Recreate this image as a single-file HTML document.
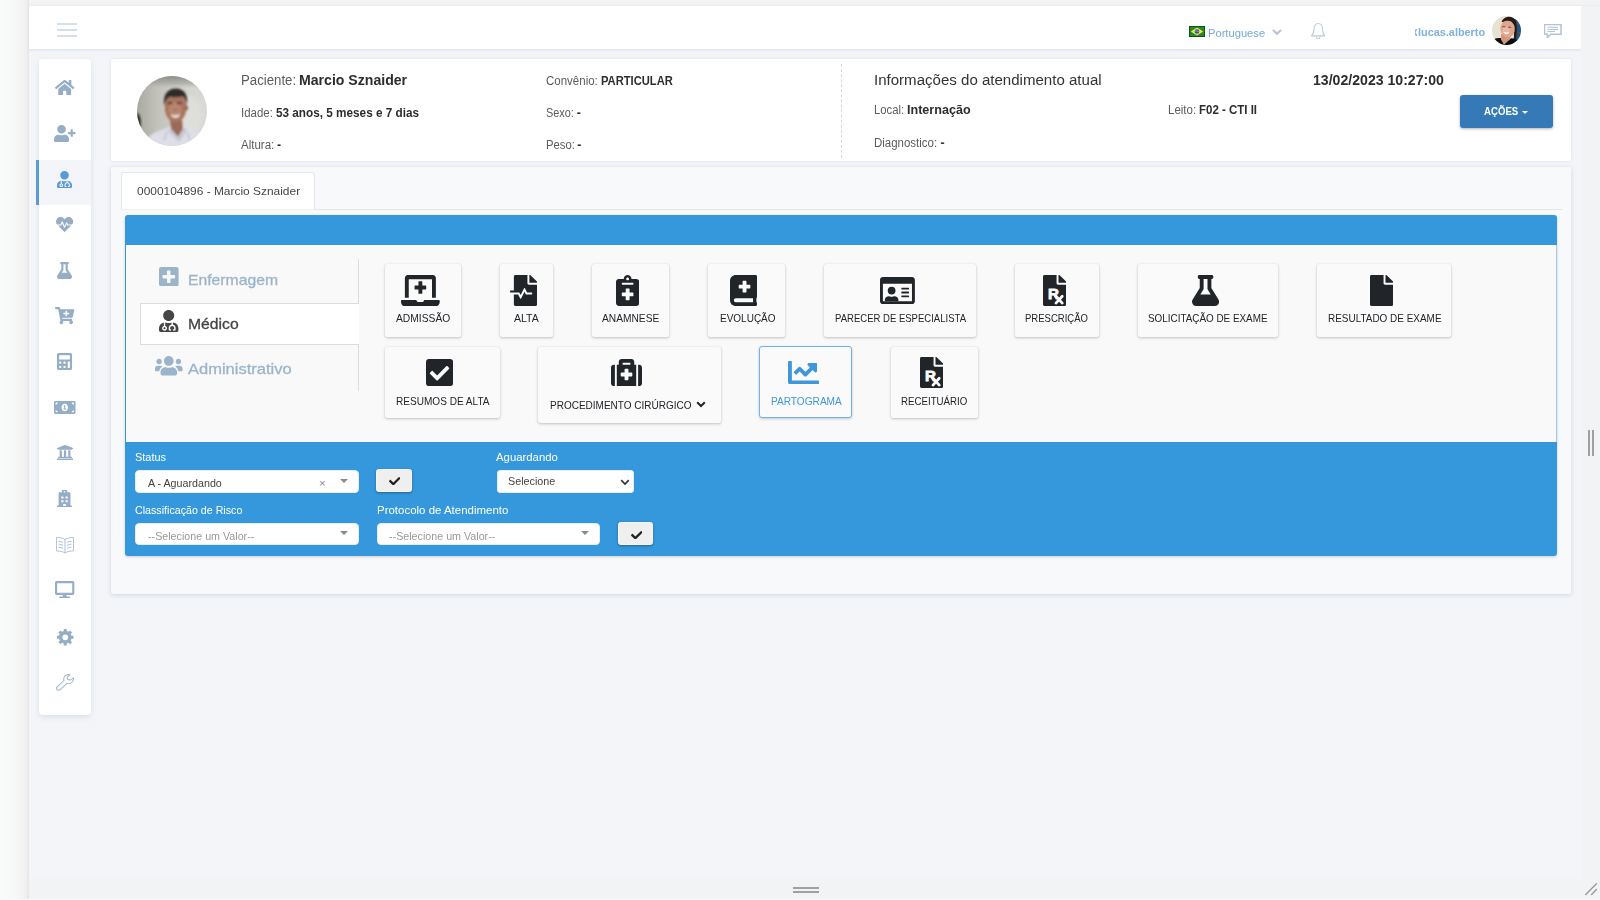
<!DOCTYPE html>
<html lang="pt-BR">
<head>
<meta charset="utf-8">
<title>Prontuário - Marcio Sznaider</title>
<style>
*{box-sizing:border-box;margin:0;padding:0}
html,body{width:1600px;height:900px;overflow:hidden}
body{font-family:"Liberation Sans",sans-serif;font-size:12px;color:#333;background:#f1f3f4;position:relative}
.abs{position:absolute}
.t{position:absolute;white-space:nowrap;line-height:1;font-style:normal;transform-origin:0 0}
#fl{left:0;top:0;width:29px;height:900px;background:linear-gradient(90deg,#f9fbfa 0,#f7f9f8 12px,#f2f3f2 23px,#eeeeee 27px,#e2e3e3 29px)}
#ft{left:29px;top:0;width:1571px;height:6px;background:linear-gradient(180deg,#f3f4f3 0,#f1f2f1 4.5px,#e9eaea 6px)}
#fr{left:1581px;top:6px;width:19px;height:894px;background:#f1f3f4}
#fb{left:29px;top:879px;width:1571px;height:21px;background:#f1f3f4}
#fb2{left:0;top:899px;width:1600px;height:1px;background:#fafbfb}
#page{left:29px;top:6px;width:1552px;height:873px;background:#f3f5f9;overflow:hidden}
#nav{left:0;top:0;width:1552px;height:43px;background:#fff;box-shadow:0 1px 2px rgba(200,207,220,.6)}
.card{background:#fff;border-radius:4px;box-shadow:0 0 3px rgba(200,208,220,.6)}
#side{left:10px;top:53px;width:52px;height:656px;box-shadow:0 2px 5px rgba(195,204,218,.5)}
#pat{left:82px;top:53px;width:1460px;height:102px;border-radius:2px}
#main{left:82px;top:160.500px;width:1460px;height:427.500px;background:#f8f9fb;border-radius:2px;box-shadow:0 1px 4px rgba(190,198,212,.7)}
.btn{background:#fafafa;border-radius:2px;box-shadow:0 1px 3px rgba(0,0,0,.22),0 0 1px rgba(0,0,0,.12)}
.btn.act{border:1.500px solid #72b2e6;border-radius:3px;box-shadow:0 1px 3px rgba(0,0,0,.2)}
.sel{background:#fff;border-radius:4px;border:1px solid #e3eef8}
.ok{background:#efefef;border:1px solid #f9f3ef;border-radius:2.500px;box-shadow:0 1px 2.500px rgba(0,0,0,.35)}
.car{width:0;height:0;border-left:4px solid transparent;border-right:4px solid transparent;border-top:4.500px solid #8a8a8a}
</style>
</head>
<body>
<div id="fl" class="abs"></div>
<div id="ft" class="abs"></div>
<div id="fr" class="abs"></div>
<div id="fb" class="abs"></div>
<div id="fb2" class="abs"></div>
<div class="abs" style="left:793px;top:887px;width:26px;height:2px;background:#a0a0a0"></div>
<div class="abs" style="left:793px;top:891px;width:26px;height:2px;background:#a0a0a0"></div>
<div class="abs" style="left:1588px;top:430px;width:2px;height:26px;background:#a0a0a0"></div>
<div class="abs" style="left:1592px;top:430px;width:2px;height:26px;background:#a0a0a0"></div>
<svg class="abs" style="left:1584px;top:882px" width="14" height="14" viewBox="0 0 14 14"><path d="M1.800 12.400L12.400 1.800M7.600 12.400L12.400 7.600" stroke="#9a9a9a" stroke-width="1.400" stroke-linecap="round"/></svg>
<div id="page" class="abs">
<div id="nav" class="abs">
<div class="abs" style="left:28px;top:17px;width:20px;height:2px;background:#d6dfea"></div>
<div class="abs" style="left:28px;top:23px;width:20px;height:2px;background:#d6dfea"></div>
<div class="abs" style="left:28px;top:29px;width:20px;height:2px;background:#d6dfea"></div>
<svg class="abs" style="left:1160px;top:20px" width="16" height="11" viewBox="0 0 16 11"><rect width="16" height="11" fill="#1f8a2e"/><rect x=".5" y=".5" width="15" height="10" fill="none" stroke="#14521c" stroke-width="1"/><path d="M8 1.600L14.300 5.500 8 9.400 1.700 5.500z" fill="#f5e033"/><circle cx="8" cy="5.500" r="2.300" fill="#2d4fc4"/><path d="M5.900 5c1.500-.3 3 .1 4.200 1" stroke="#dfe8ff" stroke-width=".5" fill="none"/></svg>
<span id="t1" class="t" style="left:1179.30px;top:21.62px;font-size:11.2px;color:#74a9dc;transform:scaleX(0.9976);">Portuguese</span>
<svg class="abs" style="left:1242.500px;top:23px" width="10" height="6" viewBox="0 0 10 6"><path d="M1 1l4 3.800L9 1" fill="none" stroke="#b5c5d8" stroke-width="2.200"/></svg>
<svg class="abs" style="left:1281.50px;top:16.60px;color:#bccbdc" width="14.50" height="16.40" viewBox="0.85 0.85 18.3 19.9" preserveAspectRatio="none" fill="currentColor" ><g fill="none" stroke="currentColor" stroke-width="1.3" stroke-linejoin="round" stroke-linecap="round"><path d="M10 1.500c-3.200 0-5.300 2.500-5.300 5.800 0 5-1.200 7.200-3.200 9.200h17c-2-2-3.200-4.200-3.200-9.200 0-3.300-2.100-5.800-5.300-5.800z"/><path d="M7.800 17.500c0 1.500 1 2.600 2.200 2.600s2.200-1.100 2.200-2.600"/></g></svg>
<span id="t2" class="t" style="left:1388.50px;top:21.02px;font-size:11.2px;color:#7fb1df;font-weight:700;transform:scaleX(0.9720);">lucas.alberto</span>
<div class="abs" style="left:1386px;top:20px;width:2px;height:11px;overflow:hidden"><span class="t" style="left:-4px;top:0;font-size:12px;font-weight:700;color:#7fb1df">x</span></div>
<svg class="abs" style="left:1463px;top:9.600px" width="29" height="29" viewBox="0 0 29 29"><defs><clipPath id="ca"><circle cx="14.500" cy="14.500" r="14.500"/></clipPath><filter id="ba" x="-20%" y="-20%" width="140%" height="140%"><feGaussianBlur stdDeviation=".6"/></filter></defs><g clip-path="url(#ca)"><rect width="29" height="29" fill="#e7e3d3"/><g filter="url(#ba)"><rect x="23" y="0" width="7" height="29" fill="#1f5583"/><rect x="23.500" y="6.800" width="6" height="1.500" fill="#7a4a33"/><rect x="23.500" y="16" width="6" height="1.500" fill="#7a4a33"/><path d="M9.800 6c1-4.500 7.500-7 12.500-3.500 3 3 3.200 11 1.700 20l-2.500 2.500c1-7 .8-13.500-1-17.500-3.200-1.500-7.700-1.800-10.700-1.500z" fill="#231a18"/><path d="M0 25c1.500-2.500 5-3.300 9.500-2.800l2.500 6 7-6c4 0 7 1.500 10 5v3H0z" fill="#101010"/><path d="M9 18l10 2-1.500 3.500-5.500 5-3-5z" fill="#d2957d"/><ellipse cx="15.600" cy="12.800" rx="7.200" ry="8.700" fill="#dfa78f" transform="rotate(-8 15.600 12.800)"/><ellipse cx="14" cy="14" rx="3.800" ry="3.300" fill="#e9b7a3"/><path d="M9.400 6.300c1.500-3.300 8-4.600 11.500-1.800l-.3 1.200c-3.500-1.400-7.700-1.200-11.200.6z" fill="#2a1e1c"/><path d="M10.300 11c.8-.6 2-.6 2.900 0M16.300 11.500c.8-.6 2-.5 2.900.2" stroke="#5a3c33" stroke-width="1" fill="none"/><path d="M11.300 15.800c1.800.9 4.300 1 6.200.2-.6 1.600-1.800 2.200-3.200 2.200-1.300 0-2.500-.8-3-2.400z" fill="#fbf5f1"/></g></g></svg>
<svg class="abs" style="left:1515.00px;top:18.00px;color:#b3c4d9" width="17.50" height="14.00" viewBox="0.4 0.4 23.2 19.2" preserveAspectRatio="none" fill="currentColor" ><g fill="none" stroke="currentColor" stroke-width="2.1"><path d="M1 1h22v13.500H9.500L4.800 19v-4.500H1z" stroke-linejoin="miter"/><path d="M5 5h14M5 7.800h14M5 10.600h10" stroke-width="1.4"/></g></svg>
</div>
<div id="side" class="abs card"></div>
<div class="abs" style="left:10px;top:154px;width:52px;height:45px;background:#f3f5f9"></div>
<div class="abs" style="left:7px;top:154px;width:3px;height:45px;background:#5b9bd5"></div>
<svg class="abs" style="left:26.32px;top:74.48px;color:#95adc5" width="19.35" height="15.05" viewBox="-0.01 32.05 576.04 447.95" preserveAspectRatio="none" fill="currentColor" ><path d="M280.37 148.26L96 300.11V464a16 16 0 0 0 16 16l112.06-.29a16 16 0 0 0 15.92-16V368a16 16 0 0 1 16-16h64a16 16 0 0 1 16 16v95.64a16 16 0 0 0 16 16.05L464 480a16 16 0 0 0 16-16V300L295.67 148.26a12.19 12.19 0 0 0-15.3 0zM571.6 251.47L488 182.56V44.05a12 12 0 0 0-12-12h-56a12 12 0 0 0-12 12v72.61L318.47 43a48 48 0 0 0-61 0L4.34 251.47a12 12 0 0 0-1.6 16.9l25.5 31A12 12 0 0 0 45.15 301l235.22-193.74a12.19 12.19 0 0 1 15.3 0L530.9 301a12 12 0 0 0 16.9-1.6l25.5-31a12 12 0 0 0-1.7-16.93z"/></svg>
<svg class="abs" style="left:25.25px;top:119.00px;color:#95adc5" width="21.50" height="17.20" viewBox="0 0 640 512" preserveAspectRatio="none" fill="currentColor" ><path d="M624 208h-64v-64c0-8.800-7.200-16-16-16h-32c-8.800 0-16 7.200-16 16v64h-64c-8.800 0-16 7.200-16 16v32c0 8.800 7.200 16 16 16h64v64c0 8.800 7.200 16 16 16h32c8.800 0 16-7.200 16-16v-64h64c8.800 0 16-7.200 16-16v-32c0-8.800-7.200-16-16-16zm-400 48c70.700 0 128-57.300 128-128S294.700 0 224 0 96 57.300 96 128s57.300 128 128 128zm89.600 32h-16.700c-22.200 10.200-46.900 16-72.900 16s-50.600-5.800-72.900-16h-16.700C60.200 288 0 348.200 0 422.400V464c0 26.500 21.500 48 48 48h352c26.500 0 48-21.500 48-48v-41.600c0-74.200-60.200-134.400-134.400-134.400z"/></svg>
<svg class="abs" style="left:28.48px;top:164.60px;color:#5b9bd5" width="15.05" height="17.20" viewBox="0 0 448 512" preserveAspectRatio="none" fill="currentColor" ><path d="M224 256c70.700 0 128-57.300 128-128S294.700 0 224 0 96 57.300 96 128s57.300 128 128 128zM104 424c0 13.300 10.700 24 24 24s24-10.700 24-24-10.700-24-24-24-24 10.700-24 24zm216-135.400v49c36.500 7.400 64 39.800 64 78.400v41.700c0 7.600-5.400 14.200-12.900 15.700l-32.200 6.400c-4.300.9-8.500-1.900-9.400-6.300l-3.100-15.700c-.9-4.300 1.900-8.600 6.300-9.400l19.300-3.900V416c0-62.800-96-65.100-96 1.900v26.700l19.300 3.900c4.300.9 7.100 5.100 6.300 9.400l-3.100 15.700c-.9 4.300-5.100 7.100-9.400 6.300l-31.200-4.200c-7.900-1.100-13.800-7.800-13.800-15.900V416c0-38.600 27.500-70.900 64-78.400v-45.200c-2.200.7-4.400 1.100-6.600 1.900-18 6.300-37.300 9.800-57.400 9.800s-39.400-3.500-57.400-9.800c-7.400-2.600-14.900-4.200-22.600-5.200v81.600c23.100 6.900 40 28.100 40 53.400 0 30.900-25.100 56-56 56s-56-25.100-56-56c0-25.300 16.900-46.500 40-53.400v-80.400C48.500 301 0 355.800 0 422.400v44.800C0 491.900 20.100 512 44.800 512h358.400c24.700 0 44.800-20.100 44.800-44.800v-44.800c0-72-56.800-130.300-128-133.800z"/></svg>
<svg class="abs" style="left:27.40px;top:211.27px;color:#95adc5" width="17.20" height="15.05" viewBox="-0.01 31.95 512.03 448.02" preserveAspectRatio="none" fill="currentColor" ><path d="M320.200 243.800l-49.700 99.400c-6 12.100-23.400 11.700-28.900-.6l-56.900-126.300-30 71.700H60.600l182.500 186.500c7.100 7.300 18.600 7.300 25.700 0L451.400 288H342.300l-22.100-44.200zM473.700 73.900l-2.400-2.500c-51.500-52.600-135.800-52.600-187.400 0L256 100l-27.900-28.500c-51.500-52.700-135.900-52.700-187.400 0l-2.400 2.400C-10.400 123.700-12.500 203 31 256h102.400l35.900-86.200c5.400-12.900 23.600-13.200 29.400-.4l58.200 129.300 49-97.900c5.900-11.800 22.700-11.800 28.600 0l27.600 55.200H481c43.500-53 41.400-132.300-7.300-182.100z"/></svg>
<svg class="abs" style="left:28.48px;top:255.80px;color:#95adc5" width="15.05" height="17.20" viewBox="0.01 0 448 512" preserveAspectRatio="none" fill="currentColor" ><path d="M437.200 403.500L320 215V64h8c13.300 0 24-10.700 24-24V24c0-13.300-10.700-24-24-24H120c-13.300 0-24 10.700-24 24v16c0 13.300 10.700 24 24 24h8v151L10.800 403.500C-18.500 450.600 15.300 512 70.900 512h306.200c55.700 0 89.400-61.500 60.100-108.500zM137.900 320l48.200-77.600c3.700-5.200 5.800-11.600 5.800-18.400V64h64v160c0 6.900 2.200 13.200 5.800 18.400l48.200 77.600h-172z"/></svg>
<svg class="abs" style="left:26.33px;top:301.40px;color:#95adc5" width="19.35" height="17.20" viewBox="0 0 576 512" preserveAspectRatio="none" fill="currentColor" ><path d="M504.717 320H211.572l6.545 32h268.418c15.401 0 26.816 14.301 23.403 29.319l-5.517 24.276C523.112 414.668 536 433.828 536 456c0 31.202-25.519 56.444-56.824 55.994-29.823-.429-54.350-24.631-55.155-54.447-.44-16.287 6.085-31.049 16.803-41.548H231.176C241.553 426.165 248 440.326 248 456c0 31.813-26.528 57.431-58.670 55.938-28.540-1.325-51.751-24.385-53.251-52.917-1.158-22.034 10.436-41.455 28.051-51.586L93.883 64H24C10.745 64 0 53.255 0 40V24C0 10.745 10.745 0 24 0h102.529c11.401 0 21.228 8.021 23.513 19.190L159.208 64H551.990c15.401 0 26.816 14.301 23.403 29.319l-47.273 208C525.637 312.246 515.923 320 504.717 320zM408 168h-48v-40c0-8.837-7.163-16-16-16h-16c-8.837 0-16 7.163-16 16v40h-48c-8.837 0-16 7.163-16 16v16c0 8.837 7.163 16 16 16h48v40c0 8.837 7.163 16 16 16h16c8.837 0 16-7.163 16-16v-40h48c8.837 0 16-7.163 16-16v-16c0-8.837-7.163-16-16-16z"/></svg>
<svg class="abs" style="left:28.48px;top:347.00px;color:#95adc5" width="15.05" height="17.20" viewBox="0 0 448 512" preserveAspectRatio="none" fill="currentColor" ><path d="M400 0H48C22.400 0 0 22.400 0 48v416c0 25.600 22.400 48 48 48h352c25.600 0 48-22.400 48-48V48c0-25.600-22.400-48-48-48zM128 435.200c0 6.400-6.400 12.800-12.800 12.800H76.800c-6.400 0-12.800-6.400-12.800-12.800v-38.400c0-6.400 6.400-12.800 12.800-12.800h38.400c6.400 0 12.800 6.400 12.800 12.800v38.400zm0-128c0 6.400-6.400 12.800-12.800 12.800H76.800c-6.400 0-12.800-6.400-12.800-12.800v-38.400c0-6.400 6.400-12.800 12.800-12.800h38.400c6.400 0 12.800 6.400 12.800 12.800v38.400zm128 128c0 6.400-6.400 12.800-12.800 12.800h-38.400c-6.400 0-12.800-6.400-12.800-12.800v-38.400c0-6.400 6.400-12.800 12.800-12.800h38.400c6.400 0 12.800 6.400 12.800 12.800v38.400zm0-128c0 6.400-6.400 12.800-12.800 12.800h-38.400c-6.400 0-12.800-6.400-12.800-12.800v-38.400c0-6.400 6.400-12.800 12.800-12.800h38.400c6.400 0 12.800 6.400 12.800 12.800v38.400zm128 128c0 6.400-6.400 12.800-12.800 12.800h-38.400c-6.400 0-12.800-6.400-12.800-12.800V268.800c0-6.400 6.400-12.800 12.800-12.800h38.400c6.400 0 12.800 6.400 12.800 12.800v166.400zm0-256c0 6.400-6.400 12.800-12.800 12.800H76.800c-6.400 0-12.800-6.400-12.800-12.800V76.800C64 70.400 70.400 64 76.800 64h294.400c6.400 0 12.800 6.400 12.800 12.800v102.400z"/></svg>
<svg class="abs" style="left:25.25px;top:394.75px;color:#95adc5" width="21.50" height="12.90" viewBox="0 64 640 384" preserveAspectRatio="none" fill="currentColor" ><path d="M352 288h-16v-88c0-4.420-3.580-8-8-8h-13.580c-4.740 0-9.370 1.400-13.310 4.030l-15.330 10.220a7.994 7.994 0 0 0-2.220 11.090l8.880 13.310a7.994 7.994 0 0 0 11.090 2.220l.47-.31V288h-16c-4.420 0-8 3.580-8 8v16c0 4.420 3.580 8 8 8h64c4.420 0 8-3.580 8-8v-16c0-4.420-3.580-8-8-8zM608 64H32C14.330 64 0 78.330 0 96v320c0 17.670 14.330 32 32 32h576c17.670 0 32-14.330 32-32V96c0-17.670-14.330-32-32-32zM48 400v-64c35.350 0 64 28.650 64 64H48zm0-224v-64h64c0 35.350-28.650 64-64 64zm272 192c-53.020 0-96-50.150-96-112 0-61.860 42.980-112 96-112s96 50.140 96 112c0 61.870-43 112-96 112zm272 32h-64c0-35.350 28.650-64 64-64v64zm0-224c-35.350 0-64-28.650-64-64h64v64z"/></svg>
<svg class="abs" style="left:27.94px;top:439.28px;color:#95adc5" width="16.12" height="15.05" viewBox="16 32 480 448" preserveAspectRatio="none" fill="currentColor" ><path d="M496 128v16a8 8 0 0 1-8 8h-24v12c0 6.627-5.373 12-12 12H60c-6.627 0-12-5.373-12-12v-12H24a8 8 0 0 1-8-8v-16a8 8 0 0 1 4.941-7.392l232-88a7.996 7.996 0 0 1 6.118 0l232 88A8 8 0 0 1 496 128zm-24 304H40c-13.255 0-24 10.745-24 24v16a8 8 0 0 0 8 8h464a8 8 0 0 0 8-8v-16c0-13.255-10.745-24-24-24zM96 192v192H60c-6.627 0-12 5.373-12 12v20h416v-20c0-6.627-5.373-12-12-12h-36V192h-64v192h-64V192h-64v192h-64V192H96z"/></svg>
<svg class="abs" style="left:28.48px;top:483.80px;color:#95adc5" width="15.05" height="17.20" viewBox="0 0 448 512" preserveAspectRatio="none" fill="currentColor" ><path fill-rule="evenodd" d="M160 0h128c9 0 16 7 16 16v48h64c18 0 32 14 32 32v368h32c9 0 16 7 16 16v32H0v-32c0-9 7-16 16-16h32V96c0-18 14-32 32-32h64V16c0-9 7-16 16-16zM128 192v64h64v-64zM256 192v64h64v-64zM128 304v64h64v-64zM256 304v64h64v-64zM184 416v64h80v-64zM200 40v32h48V40z"/></svg>
<svg class="abs" style="left:27.00px;top:531.00px;color:#a9bdd0" width="18.00" height="16.50" viewBox="0.95 1.45 22.1 19.6" preserveAspectRatio="none" fill="currentColor" ><g fill="none" stroke="currentColor" stroke-width="1.1" stroke-linejoin="round"><path d="M12 4.500C9.500 2.800 5.500 2 1.500 2v16c4 0 8 .8 10.500 2.500C14.500 18.800 18.500 18 22.500 18V2c-4 0-8 .8-10.500 2.500zM12 4.500v16"/><path d="M4 6.500c2 .2 4 .7 5.500 1.400M4 10c2 .2 4 .7 5.500 1.400M4 13.500c2 .2 4 .7 5.500 1.400M20 6.500c-2 .2-4 .7-5.500 1.400M20 10c-2 .2-4 .7-5.500 1.400M20 13.500c-2 .2-4 .7-5.500 1.400"/></g></svg>
<svg class="abs" style="left:26.33px;top:575.00px;color:#95adc5" width="19.35" height="17.20" viewBox="0 0 576 512" preserveAspectRatio="none" fill="currentColor" ><path d="M528 0H48C21.500 0 0 21.500 0 48v320c0 26.500 21.500 48 48 48h192l-16 48h-72c-13.300 0-24 10.700-24 24s10.700 24 24 24h272c13.300 0 24-10.700 24-24s-10.700-24-24-24h-72l-16-48h192c26.500 0 48-21.500 48-48V48c0-26.500-21.500-48-48-48zm-16 352H64V64h448v288z"/></svg>
<svg class="abs" style="left:28.00px;top:623.00px;color:#95adc5" width="16.50" height="16.60" viewBox="9.7 9.7 492.6 492.6" preserveAspectRatio="none" fill="currentColor" ><path fill-rule="evenodd" d="M213.0 9.7 L299.0 9.7 L300.8 69.3 L356.3 92.3 L399.8 51.5 L460.5 112.2 L419.7 155.7 L442.7 211.2 L502.3 213.0 L502.3 299.0 L442.7 300.8 L419.7 356.3 L460.5 399.8 L399.8 460.5 L356.3 419.7 L300.8 442.7 L299.0 502.3 L213.0 502.3 L211.2 442.7 L155.7 419.7 L112.2 460.5 L51.5 399.8 L92.3 356.3 L69.3 300.8 L9.7 299.0 L9.7 213.0 L69.3 211.2 L92.3 155.7 L51.5 112.2 L112.2 51.5 L155.7 92.3 L211.2 69.3ZM170 256a86 86 0 1 0 172 0a86 86 0 1 0 -172 0z"/></svg>
<svg class="abs" style="left:27.00px;top:668.00px;color:#9fb6cc" width="18.00" height="16.70" viewBox="1.05 1.33 21.22 21.22" preserveAspectRatio="none" fill="currentColor" ><path fill="none" stroke="currentColor" stroke-width="1.2" stroke-linejoin="round" d="M21.500 6.200c.5 2-.1 4.100-1.600 5.600-1.600 1.600-3.900 2.100-5.900 1.500L6 21.200c-1 1-2.600 1-3.600 0s-1-2.600 0-3.600l8-8c-.6-2-.1-4.300 1.500-5.900 1.500-1.500 3.600-2.100 5.600-1.600l-3.300 3.300.7 2.900 2.900.7z"/></svg>
<div id="pat" class="abs card"></div>
<svg class="abs" style="left:108px;top:70px" width="70" height="70" viewBox="0 0 70 70"><defs><clipPath id="cp"><circle cx="35" cy="35" r="35"/></clipPath><filter id="bp" x="-20%" y="-20%" width="140%" height="140%"><feGaussianBlur stdDeviation=".9"/></filter><filter id="bp2" x="-20%" y="-20%" width="140%" height="140%"><feGaussianBlur stdDeviation="2.500"/></filter><linearGradient id="gp" x1="0" y1="0" x2="1" y2="0"><stop offset="0" stop-color="#a9a9a1"/><stop offset=".3" stop-color="#c3c3bc"/><stop offset=".7" stop-color="#d3d3cf"/><stop offset="1" stop-color="#d8d8d6"/></linearGradient><linearGradient id="gt" x1="0" y1="0" x2="0" y2="1"><stop offset="0" stop-color="#8d8e88"/><stop offset=".6" stop-color="#a3a49e" stop-opacity=".7"/><stop offset="1" stop-color="#b0b0aa" stop-opacity="0"/></linearGradient></defs><g clip-path="url(#cp)"><rect width="70" height="70" fill="url(#gp)"/><rect width="70" height="12" fill="url(#gt)"/><ellipse cx="52" cy="40" rx="14" ry="20" fill="#dededb" filter="url(#bp2)"/><g filter="url(#bp)"><path d="M-2 36c5 1 7 8 5 17l-6 3z" fill="#2a2522"/><path d="M8 72c1-11 7-16 20-19l6-3h12l6 2c9 2 15 7 17 16l-5 6z" fill="#dedee8"/><path d="M33 44h12l1 9-5 8-7-8z" fill="#9a6a56"/><path d="M33 52l8 9 6-9 3 2-8 12-11-11z" fill="#c6c6d2"/><path d="M30 55l-3 9M50 56l3 8" stroke="#bdbdc9" stroke-width="1.200" fill="none"/><ellipse cx="38.600" cy="31.500" rx="10.800" ry="15" fill="#a8755f"/><ellipse cx="38" cy="34" rx="6.500" ry="8" fill="#b8856f"/><ellipse cx="49.600" cy="32" rx="1.400" ry="2.800" fill="#96614d"/><path d="M27.300 30c-1.800-11 3-17.500 11.500-17.500 8.400 0 12.800 6.500 11 16.500-.8-4.500-2.300-7.500-4.300-8.800-4.200 1.300-9.200 1.300-13 .6-2.600 1.800-4.200 4.600-5.200 9.200z" fill="#2e2a2a"/><path d="M33.700 38.200c2.500 1.300 7 1.300 9.600-.2-.8 2.600-2.600 3.900-4.800 3.900s-4-1.200-4.800-3.700z" fill="#eadfda"/><path d="M30.800 27.600c1.300-.9 3.200-.9 4.500 0M40 27.600c1.300-.9 3.200-.9 4.500 0" stroke="#3e2a24" stroke-width="1.700" fill="none"/><path d="M36.500 33.500c1 .8 2.500.8 3.600 0" stroke="#8a5a48" stroke-width="1" fill="none"/></g></g></svg>
<span id="t3" class="t" style="left:211.50px;top:67.15px;font-size:14px;color:#5c5c5c;transform:scaleX(0.9433);">Paciente:</span>
<b id="t4" class="t" style="left:270.25px;top:67.15px;font-size:14px;color:#2d2d2d;font-weight:700;transform:scaleX(1.0068);">Marcio Sznaider</b>
<span id="t5" class="t" style="left:211.50px;top:100.84px;font-size:12px;color:#5c5c5c;transform:scaleX(0.9535);">Idade:</span>
<b id="t6" class="t" style="left:246.50px;top:100.84px;font-size:12px;color:#2d2d2d;font-weight:700;transform:scaleX(0.9794);">53 anos, 5 meses e 7 dias</b>
<span id="t7" class="t" style="left:211.50px;top:132.84px;font-size:12px;color:#5c5c5c;transform:scaleX(0.9608);">Altura:</span>
<b id="t8" class="t" style="left:248.00px;top:132.84px;font-size:12px;color:#2d2d2d;font-weight:700;">-</b>
<span id="t9" class="t" style="left:516.75px;top:68.84px;font-size:12px;color:#5c5c5c;transform:scaleX(0.9589);">Convênio:</span>
<b id="t10" class="t" style="left:571.50px;top:68.84px;font-size:12px;color:#2d2d2d;font-weight:700;transform:scaleX(0.9313);">PARTICULAR</b>
<span id="t11" class="t" style="left:516.75px;top:100.84px;font-size:12px;color:#5c5c5c;transform:scaleX(0.9057);">Sexo:</span>
<b id="t12" class="t" style="left:547.75px;top:100.84px;font-size:12px;color:#2d2d2d;font-weight:700;">-</b>
<span id="t13" class="t" style="left:516.75px;top:132.84px;font-size:12px;color:#5c5c5c;transform:scaleX(0.9389);">Peso:</span>
<b id="t14" class="t" style="left:548.25px;top:132.84px;font-size:12px;color:#2d2d2d;font-weight:700;">-</b>
<div class="abs" style="left:812px;top:58px;width:0;height:94px;border-left:1px dashed #d9d9d9"></div>
<span id="t15" class="t" style="left:844.75px;top:67.15px;font-size:14px;color:#333;transform:scaleX(1.0753);">Informações do atendimento atual</span>
<b id="t16" class="t" style="left:1283.50px;top:67.15px;font-size:14px;color:#2d2d2d;font-weight:700;transform:scaleX(1.0070);">13/02/2023 10:27:00</b>
<span id="t17" class="t" style="left:844.75px;top:97.84px;font-size:12px;color:#5c5c5c;transform:scaleX(0.9386);">Local:</span>
<b id="t18" class="t" style="left:878.00px;top:97.84px;font-size:12px;color:#2d2d2d;font-weight:700;transform:scaleX(1.0485);">Internação</b>
<span id="t19" class="t" style="left:1138.50px;top:97.84px;font-size:12px;color:#5c5c5c;transform:scaleX(0.9562);">Leito:</span>
<b id="t20" class="t" style="left:1169.75px;top:97.84px;font-size:12px;color:#2d2d2d;font-weight:700;transform:scaleX(0.9569);">F02 - CTI II</b>
<span id="t21" class="t" style="left:844.75px;top:130.84px;font-size:12px;color:#5c5c5c;transform:scaleX(0.9550);">Diagnostico:</span>
<b id="t22" class="t" style="left:911.50px;top:130.84px;font-size:12px;color:#2d2d2d;font-weight:700;">-</b>
<div class="abs" style="left:1431px;top:89px;width:93px;height:33px;background:#3579b7;border-radius:3px;box-shadow:0 1px 3px rgba(0,0,0,.3)"></div>
<span id="t23" class="t" style="left:1455.40px;top:100.88px;font-size:10.3px;color:#fff;font-weight:700;transform:scaleX(0.9355);">AÇÕES</span>
<div class="abs" style="left:1492.500px;top:105px;width:0;height:0;border-left:3.500px solid transparent;border-right:3.500px solid transparent;border-top:3.500px solid #fff"></div>
<div id="main" class="abs card"></div>
<div class="abs" style="left:92px;top:203px;width:1441px;height:1px;background:#e2e4e7"></div>
<div class="abs" style="left:92px;top:166px;width:194px;height:38px;background:#fff;border:1px solid #e3e6ea;border-bottom-color:#eef0f3;border-radius:3px 3px 0 0"></div>
<span id="t24" class="t" style="left:108.00px;top:179.18px;font-size:11.6px;color:#454545;transform:scaleX(1.0287);">0000104896 - Marcio Sznaider</span>
<div class="abs" style="left:96px;top:209px;width:1432px;height:341px;background:#3598dc;border-radius:3px;box-shadow:0 1px 3px rgba(0,0,0,.18)"></div>
<div class="abs" style="left:97px;top:238.500px;width:1431px;height:197.500px;background:#f9f9f9;border-right:1.500px solid #9ccaee"></div>
<div class="abs" style="left:329px;top:253px;width:1px;height:132px;background:#dddddd"></div>
<div class="abs" style="left:111px;top:297px;width:219px;height:42px;background:#fff;border:1px solid #ddd;border-right:none"></div>
<svg class="abs" style="left:130.20px;top:261.00px;color:#9bb4ca" width="19.60" height="19.40" viewBox="0 32 448 448" preserveAspectRatio="none" fill="currentColor" ><path d="M400 32H48C21.500 32 0 53.500 0 80v352c0 26.500 21.500 48 48 48h352c26.500 0 48-21.500 48-48V80c0-26.500-21.500-48-48-48zm-32 252c0 6.600-5.400 12-12 12h-92v92c0 6.600-5.400 12-12 12h-56c-6.600 0-12-5.400-12-12v-92H92c-6.600 0-12-5.400-12-12v-56c0-6.600 5.400-12 12-12h92v-92c0-6.600 5.400-12 12-12h56c6.600 0 12 5.400 12 12v92h92c6.600 0 12 5.400 12 12v56z"/></svg>
<span id="t25" class="t" style="left:159.00px;top:266.30px;font-size:15px;color:#9bb4ca;transform:scaleX(1.0484);-webkit-text-stroke:0.3px #9bb4ca;">Enfermagem</span>
<svg class="abs" style="left:130.20px;top:304.00px;color:#454545" width="19.40" height="22.10" viewBox="0 0 448 512" preserveAspectRatio="none" fill="currentColor" ><path d="M224 256c70.700 0 128-57.300 128-128S294.700 0 224 0 96 57.300 96 128s57.300 128 128 128zM104 424c0 13.300 10.700 24 24 24s24-10.700 24-24-10.700-24-24-24-24 10.700-24 24zm216-135.400v49c36.500 7.400 64 39.800 64 78.400v41.700c0 7.600-5.400 14.200-12.900 15.700l-32.200 6.400c-4.300.9-8.500-1.900-9.400-6.300l-3.100-15.700c-.9-4.300 1.900-8.600 6.300-9.400l19.300-3.900V416c0-62.800-96-65.100-96 1.900v26.700l19.300 3.900c4.300.9 7.100 5.100 6.300 9.400l-3.100 15.700c-.9 4.300-5.100 7.100-9.400 6.300l-31.200-4.200c-7.900-1.100-13.800-7.800-13.800-15.900V416c0-38.600 27.500-70.900 64-78.400v-45.200c-2.200.7-4.400 1.100-6.600 1.900-18 6.300-37.300 9.800-57.400 9.800s-39.400-3.500-57.400-9.800c-7.400-2.600-14.900-4.200-22.600-5.200v81.600c23.100 6.900 40 28.100 40 53.400 0 30.900-25.100 56-56 56s-56-25.100-56-56c0-25.300 16.900-46.500 40-53.400v-80.400C48.500 301 0 355.800 0 422.400v44.800C0 491.900 20.100 512 44.800 512h358.400c24.700 0 44.800-20.100 44.800-44.800v-44.800c0-72-56.800-130.300-128-133.800z"/></svg>
<span id="t26" class="t" style="left:159.00px;top:309.90px;font-size:15px;color:#444;transform:scaleX(1.0469);-webkit-text-stroke:0.3px #444;">Médico</span>
<svg class="abs" style="left:126.00px;top:350.00px;color:#9bb4ca" width="27.60" height="19.50" viewBox="0 32 640 448" preserveAspectRatio="none" fill="currentColor" ><path d="M96 224c35.300 0 64-28.700 64-64s-28.700-64-64-64-64 28.700-64 64 28.700 64 64 64zm448 0c35.300 0 64-28.700 64-64s-28.700-64-64-64-64 28.700-64 64 28.700 64 64 64zm32 32h-64c-17.600 0-33.500 7.100-45.100 18.600 40.300 22.100 68.900 62 75.100 109.400h66c17.700 0 32-14.300 32-32v-32c0-35.300-28.700-64-64-64zm-256 0c61.900 0 112-50.100 112-112S381.900 32 320 32 208 82.100 208 144s50.100 112 112 112zm76.800 32h-8.300c-20.800 10-43.900 16-68.500 16s-47.600-6-68.500-16h-8.300C179.600 288 128 339.600 128 403.200V432c0 26.500 21.500 48 48 48h288c26.500 0 48-21.500 48-48v-28.800c0-63.600-51.600-115.200-115.200-115.200zm-223.700-13.400C161.500 263.100 145.600 256 128 256H64c-35.300 0-64 28.700-64 64v32c0 17.700 14.300 32 32 32h65.900c6.300-47.400 34.900-87.300 75.200-109.400z"/></svg>
<span id="t27" class="t" style="left:159.00px;top:354.90px;font-size:15px;color:#9bb4ca;transform:scaleX(1.1004);-webkit-text-stroke:0.3px #9bb4ca;">Administrativo</span>
<div class="abs btn" style="left:356px;top:258px;width:75.5px;height:72.5px;"></div><svg class="abs" style="left:371.98px;top:269.00px;color:#212529" width="38.75" height="31.20" viewBox="0 0 640 480" preserveAspectRatio="none" fill="currentColor" ><path d="M64 352V48C64 21.500 85.500 0 112 0h416c26.500 0 48 21.500 48 48v304h-64V64H128v288z"/><path d="M232 224h56v56a8 8 0 0 0 8 8h48a8 8 0 0 0 8-8v-56h56a8 8 0 0 0 8-8v-48a8 8 0 0 0-8-8h-56v-56a8 8 0 0 0-8-8h-48a8 8 0 0 0-8 8v56h-56a8 8 0 0 0-8 8v48a8 8 0 0 0 8 8z"/><path d="M624 384H381.500c-.7 19.800-14.700 32-32.700 32H288c-18.700 0-33-17.500-32.800-32H16c-8.800 0-16 7.200-16 16v16c0 35.200 28.800 64 64 64h512c35.200 0 64-28.800 64-64v-16c0-8.800-7.200-16-16-16z"/></svg><span id="t28" class="t" style="left:367.00px;top:307.09px;font-size:11px;color:#212529;transform:scaleX(0.9343);">ADMISSÃO</span>
<div class="abs btn" style="left:470.5px;top:258px;width:53.5px;height:72.5px;"></div><svg class="abs" style="left:481.29px;top:269.00px;color:#212529" width="27.12" height="31.00" viewBox="0 0 448 512" preserveAspectRatio="none" fill="currentColor" ><path d="M288 136V0H88C74.700 0 64 10.700 64 24v232H8c-4.400 0-8 3.600-8 8v16c0 4.400 3.600 8 8 8h140.900c3 0 5.800 1.700 7.200 4.400l19.900 39.800 56.800-113.700c2.900-5.900 11.400-5.900 14.300 0l34.700 69.500H352c8.800 0 16 7.200 16 16s-7.200 16-16 16h-89.900L240 275.800l-56.800 113.700c-2.900 5.900-11.400 5.900-14.300 0L134.100 320H64v168c0 13.300 10.700 24 24 24h336c13.300 0 24-10.700 24-24V160H312c-13.200 0-24-10.800-24-24zm153-31L343.100 7c-4.500-4.500-10.600-7-17-7H320v128h128v-6.100c0-6.300-2.500-12.400-7-16.900z"/></svg><span id="t29" class="t" style="left:484.75px;top:307.09px;font-size:11px;color:#212529;transform:scaleX(0.9589);">ALTA</span>
<div class="abs btn" style="left:562.5px;top:258px;width:77.5px;height:72.5px;"></div><svg class="abs" style="left:587.23px;top:269.00px;color:#212529" width="23.25" height="31.00" viewBox="0 0 384 512" preserveAspectRatio="none" fill="currentColor" ><path d="M336 64h-80c0-35.300-28.700-64-64-64s-64 28.700-64 64H48C21.500 64 0 85.500 0 112v352c0 26.500 21.500 48 48 48h288c26.500 0 48-21.500 48-48V112c0-26.500-21.500-48-48-48zM192 40c13.300 0 24 10.700 24 24s-10.700 24-24 24-24-10.700-24-24 10.700-24 24-24zm96 304c0 4.400-3.600 8-8 8h-56v56c0 4.400-3.600 8-8 8h-48c-4.400 0-8-3.600-8-8v-56h-56c-4.400 0-8-3.600-8-8v-48c0-4.400 3.600-8 8-8h56v-56c0-4.400 3.600-8 8-8h48c4.400 0 8 3.600 8 8v56h56c4.400 0 8 3.600 8 8v48zm0-192c0 4.400-3.600 8-8 8H104c-4.400 0-8-3.600-8-8v-16c0-4.400 3.600-8 8-8h176c4.400 0 8 3.600 8 8v16z"/></svg><span id="t30" class="t" style="left:573.00px;top:307.09px;font-size:11px;color:#212529;transform:scaleX(0.9280);">ANAMNESE</span>
<div class="abs btn" style="left:678.75px;top:258px;width:77px;height:72.5px;"></div><svg class="abs" style="left:701.29px;top:269.00px;color:#212529" width="27.12" height="31.00" viewBox="0 0 448 512" preserveAspectRatio="none" fill="currentColor" ><path d="M448 358.400V25.600c0-16-9.600-25.600-25.600-25.600H96C41.600 0 0 41.600 0 96v320c0 54.400 41.600 96 96 96h326.400c12.800 0 25.600-9.600 25.600-25.600v-16q0-9.600-9.600-19.200c-3.200-16-3.200-60.800 0-73.600q9.600-4.800 9.600-19.200zM144 168a8 8 0 0 1 8-8h56v-56a8 8 0 0 1 8-8h48a8 8 0 0 1 8 8v56h56a8 8 0 0 1 8 8v48a8 8 0 0 1-8 8h-56v56a8 8 0 0 1-8 8h-48a8 8 0 0 1-8-8v-56h-56a8 8 0 0 1-8-8zm236.800 280H96c-19.200 0-32-12.800-32-32s16-32 32-32h284.800z"/></svg><span id="t31" class="t" style="left:690.50px;top:307.09px;font-size:11px;color:#212529;transform:scaleX(0.9085);">EVOLUÇÃO</span>
<div class="abs btn" style="left:794.5px;top:258px;width:152.25px;height:72.5px;"></div><svg class="abs" style="left:850.79px;top:270.94px;color:#212529" width="34.88" height="27.12" viewBox="0 32 576 448" preserveAspectRatio="none" fill="currentColor" ><path fill-rule="evenodd" d="M48 32h480c26.500 0 48 21.500 48 48v352c0 26.500-21.500 48-48 48H48c-26.500 0-48-21.500-48-48V80c0-26.500 21.500-48 48-48zM48 144v288h480V144z"/><circle cx="192" cy="256" r="64"/><path d="M80 432v-22c0-32 30-58 67-58 11 0 19 8 45 8s34-8 45-8c37 0 67 26 67 58v22z"/><rect x="352" y="208" width="128" height="32" rx="8"/><rect x="352" y="272" width="128" height="32" rx="8"/><rect x="352" y="336" width="128" height="32" rx="8"/></svg><span id="t32" class="t" style="left:805.50px;top:307.09px;font-size:11px;color:#212529;transform:scaleX(0.8665);">PARECER DE ESPECIALISTA</span>
<div class="abs btn" style="left:985.5px;top:258px;width:84.5px;height:72.5px;"></div><svg class="abs" style="left:1013.72px;top:269.00px;color:#212529" width="23.25" height="31.00" viewBox="0 0 384 512" preserveAspectRatio="none" fill="currentColor" ><path d="M224 136V0H24C10.700 0 0 10.700 0 24v464c0 13.300 10.700 24 24 24h336c13.300 0 24-10.700 24-24V160H248c-13.200 0-24-10.800-24-24zm160-14.100v6.100H256V0h6.100c6.400 0 12.500 2.500 17 7l97.900 98c4.500 4.500 7 10.600 7 16.900z"/><text x="84" y="400" font-family="Liberation Sans, sans-serif" font-weight="700" font-size="250" fill="#fafafa" stroke="#fafafa" stroke-width="14">R</text><path d="M214 352l104 112M318 352L214 464" stroke="#fafafa" stroke-width="46" stroke-linecap="round" fill="none"/></svg><span id="t33" class="t" style="left:996.00px;top:307.09px;font-size:11px;color:#212529;transform:scaleX(0.8663);">PRESCRIÇÃO</span>
<div class="abs btn" style="left:1108.75px;top:258px;width:140.5px;height:72.5px;"></div><svg class="abs" style="left:1163.04px;top:269.00px;color:#212529" width="27.12" height="31.00" viewBox="0.01 0 448 512" preserveAspectRatio="none" fill="currentColor" ><path d="M437.200 403.500L320 215V64h8c13.300 0 24-10.700 24-24V24c0-13.300-10.700-24-24-24H120c-13.300 0-24 10.700-24 24v16c0 13.300 10.700 24 24 24h8v151L10.800 403.500C-18.500 450.600 15.300 512 70.900 512h306.200c55.700 0 89.400-61.500 60.100-108.500zM137.900 320l48.200-77.600c3.700-5.200 5.800-11.600 5.800-18.400V64h64v160c0 6.900 2.200 13.200 5.800 18.400l48.200 77.600h-172z"/></svg><span id="t34" class="t" style="left:1119.00px;top:307.09px;font-size:11px;color:#212529;transform:scaleX(0.8984);">SOLICITAÇÃO DE EXAME</span>
<div class="abs btn" style="left:1288px;top:258px;width:134px;height:72.5px;"></div><svg class="abs" style="left:1340.97px;top:269.00px;color:#212529" width="23.25" height="31.00" viewBox="0 0 384 512" preserveAspectRatio="none" fill="currentColor" ><path d="M224 136V0H24C10.700 0 0 10.700 0 24v464c0 13.300 10.700 24 24 24h336c13.300 0 24-10.700 24-24V160H248c-13.200 0-24-10.800-24-24zm160-14.100v6.100H256V0h6.100c6.400 0 12.500 2.500 17 7l97.900 98c4.500 4.500 7 10.600 7 16.900z"/></svg><span id="t35" class="t" style="left:1298.50px;top:307.09px;font-size:11px;color:#212529;transform:scaleX(0.9046);">RESULTADO DE EXAME</span>
<div class="abs btn" style="left:356px;top:341px;width:114.5px;height:71px;"></div><svg class="abs" style="left:397.29px;top:352.94px;color:#212529" width="27.12" height="27.12" viewBox="0 32 448 448" preserveAspectRatio="none" fill="currentColor" ><path d="M400 480H48c-26.510 0-48-21.490-48-48V80c0-26.510 21.490-48 48-48h352c26.510 0 48 21.490 48 48v352c0 26.510-21.490 48-48 48zm-204.686-98.059l184-184c6.248-6.248 6.248-16.379 0-22.627l-22.627-22.627c-6.248-6.248-16.379-6.249-22.628 0L184 302.745l-70.059-70.059c-6.248-6.248-16.379-6.248-22.628 0l-22.627 22.627c-6.248 6.248-6.248 16.379 0 22.627l104 104c6.249 6.250 16.379 6.250 22.628.001z"/></svg><span id="t36" class="t" style="left:367.25px;top:390.09px;font-size:11px;color:#212529;transform:scaleX(0.9145);">RESUMOS DE ALTA</span>
<div class="abs btn" style="left:509px;top:341px;width:182.75px;height:76px;"></div><svg class="abs" style="left:582.48px;top:352.94px;color:#212529" width="31.00" height="27.12" viewBox="0 32 512 448" preserveAspectRatio="none" fill="currentColor" ><path d="M96 480h320V128h-32V80c0-26.510-21.490-48-48-48H176c-26.510 0-48 21.490-48 48v48H96v352zm96-384h128v32H192V96zm320 80v256c0 26.510-21.490 48-48 48h-16V128h16c26.510 0 48 21.490 48 48zM64 480H48c-26.510 0-48-21.490-48-48V176c0-26.510 21.490-48 48-48h16v352zm288-208v32c0 8.837-7.163 16-16 16h-48v48c0 8.837-7.163 16-16 16h-32c-8.837 0-16-7.163-16-16v-48h-48c-8.837 0-16-7.163-16-16v-32c0-8.837 7.163-16 16-16h48v-48c0-8.837 7.163-16 16-16h32c8.837 0 16 7.163 16 16v48h48c8.837 0 16 7.163 16 16z" fill-rule="evenodd"/></svg><span id="t37" class="t" style="left:520.50px;top:394.09px;font-size:11px;color:#212529;transform:scaleX(0.9094);">PROCEDIMENTO CIRÚRGICO</span>
<svg class="abs" style="left:667px;top:395px" width="10" height="7" viewBox="0 0 10 7"><path d="M1.200 1.200L5 5l3.800-3.800" fill="none" stroke="#212529" stroke-width="2"/></svg>
<div class="abs btn act" style="left:729.9px;top:340.3px;width:93px;height:71.8px;"></div><svg class="abs" style="left:758.60px;top:354.88px;color:#3f97db" width="31.00" height="23.25" viewBox="0 64 512 384" preserveAspectRatio="none" fill="currentColor" ><path d="M496 384H64V80c0-8.840-7.160-16-16-16H16C7.160 64 0 71.160 0 80v336c0 17.670 14.330 32 32 32h464c8.840 0 16-7.160 16-16v-32c0-8.840-7.160-16-16-16zM464 96H345.940c-21.380 0-32.090 25.850-16.970 40.970l32.400 32.400L288 242.750l-73.370-73.370c-12.500-12.500-32.760-12.500-45.250 0l-68.690 68.690c-6.250 6.250-6.250 16.380 0 22.630l22.620 22.620c6.250 6.250 16.380 6.250 22.630 0L192 237.250l73.370 73.370c12.500 12.500 32.760 12.500 45.250 0l96-96 32.400 32.400c15.120 15.120 40.970 4.410 40.970-16.970V112c.01-8.840-7.150-16-15.990-16z"/></svg><span id="t38" class="t" style="left:741.50px;top:390.09px;font-size:11px;color:#3f97db;transform:scaleX(0.9191);">PARTOGRAMA</span>
<div class="abs btn" style="left:861.5px;top:341px;width:87.25px;height:71px;"></div><svg class="abs" style="left:891.10px;top:351.00px;color:#212529" width="23.25" height="31.00" viewBox="0 0 384 512" preserveAspectRatio="none" fill="currentColor" ><path d="M224 136V0H24C10.700 0 0 10.700 0 24v464c0 13.300 10.700 24 24 24h336c13.300 0 24-10.700 24-24V160H248c-13.200 0-24-10.800-24-24zm160-14.100v6.100H256V0h6.100c6.400 0 12.500 2.500 17 7l97.900 98c4.500 4.500 7 10.600 7 16.900z"/><text x="84" y="400" font-family="Liberation Sans, sans-serif" font-weight="700" font-size="250" fill="#fafafa" stroke="#fafafa" stroke-width="14">R</text><path d="M214 352l104 112M318 352L214 464" stroke="#fafafa" stroke-width="46" stroke-linecap="round" fill="none"/></svg><span id="t39" class="t" style="left:872.25px;top:390.09px;font-size:11px;color:#212529;transform:scaleX(0.8815);">RECEITUÁRIO</span>
<label id="t40" class="t" style="left:106.00px;top:446.06px;font-size:10.8px;color:#fff;transform:scaleX(1.0163);">Status</label>
<div class="abs sel" style="left:106px;top:464px;width:224px;height:22.500px"></div>
<span id="t41" class="t" style="left:118.60px;top:472.23px;font-size:10.6px;color:#444;transform:scaleX(1.0104);">A - Aguardando</span>
<span id="t42" class="t" style="left:290.00px;top:471.69px;font-size:11px;color:#888;">×</span>
<div class="abs car" style="left:310.500px;top:472.500px"></div>
<div class="abs ok" style="left:347.400px;top:463px;width:35.700px;height:23.100px"></div>
<svg class="abs" style="left:359.70px;top:470.70px;color:#222" width="11.50" height="8.50" viewBox="0 65.1 512 381.8" preserveAspectRatio="none" fill="currentColor" ><path d="M173.898 439.404l-166.4-166.4c-9.997-9.997-9.997-26.206 0-36.204l36.203-36.204c9.997-9.998 26.207-9.998 36.204 0L192 312.690 432.095 72.596c9.997-9.997 26.207-9.997 36.204 0l36.203 36.204c9.997 9.997 9.997 26.206 0 36.204l-294.400 294.401c-9.998 9.997-26.207 9.997-36.204-.001z"/></svg>
<label id="t43" class="t" style="left:467.25px;top:446.06px;font-size:10.8px;color:#fff;transform:scaleX(1.0516);">Aguardando</label>
<div class="abs sel" style="left:467.750px;top:464.250px;width:137px;height:22.250px;border-radius:3px"></div>
<span id="t44" class="t" style="left:478.50px;top:469.93px;font-size:11.3px;color:#444;transform:scaleX(0.9536);">Selecione</span>
<svg class="abs" style="left:590.500px;top:472.500px" width="10" height="7" viewBox="0 0 10 7"><path d="M1.200 1.200L5 5l3.800-3.800" fill="none" stroke="#333" stroke-width="1.700"/></svg>
<label id="t45" class="t" style="left:106.00px;top:498.66px;font-size:10.8px;color:#fff;transform:scaleX(0.9882);">Classificação de Risco</label>
<div class="abs sel" style="left:106px;top:516.500px;width:224px;height:22px"></div>
<span id="t46" class="t" style="left:118.50px;top:524.79px;font-size:11px;color:#999;transform:scaleX(0.9734);">--Selecione um Valor--</span>
<div class="abs car" style="left:310.500px;top:524.500px"></div>
<label id="t47" class="t" style="left:347.75px;top:498.66px;font-size:10.8px;color:#fff;transform:scaleX(1.0625);">Protocolo de Atendimento</label>
<div class="abs sel" style="left:347.500px;top:516.500px;width:223.500px;height:22px"></div>
<span id="t48" class="t" style="left:360.00px;top:524.79px;font-size:11px;color:#999;transform:scaleX(0.9734);">--Selecione um Valor--</span>
<div class="abs car" style="left:552px;top:524.500px"></div>
<div class="abs ok" style="left:589px;top:516px;width:35.400px;height:23px"></div>
<svg class="abs" style="left:601.60px;top:524.70px;color:#222" width="11.60" height="8.50" viewBox="0 65.1 512 381.8" preserveAspectRatio="none" fill="currentColor" ><path d="M173.898 439.404l-166.4-166.4c-9.997-9.997-9.997-26.206 0-36.204l36.203-36.204c9.997-9.998 26.207-9.998 36.204 0L192 312.690 432.095 72.596c9.997-9.997 26.207-9.997 36.204 0l36.203 36.204c9.997 9.997 9.997 26.206 0 36.204l-294.400 294.401c-9.998 9.997-26.207 9.997-36.204-.001z"/></svg>
</div>
</body>
</html>
